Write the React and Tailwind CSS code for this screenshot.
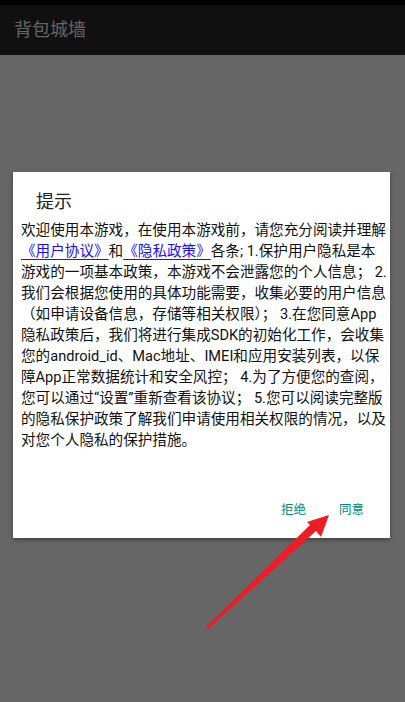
import React from "react";

const Link = ({ children }) => (
  <span className="text-[#1a0dff] underline decoration-1 underline-offset-[3px]">{children}</span>
);

export default function App() {
  const lines = [
    "欢迎使用本游戏，在使用本游戏前，请您充分阅读并理解",
    null,
    "游戏的一项基本政策，本游戏不会泄露您的个人信息； 2.",
    "我们会根据您使用的具体功能需要，收集必要的用户信息",
    "（如申请设备信息，存储等相关权限）； 3.在您同意App",
    "隐私政策后，我们将进行集成SDK的初始化工作，会收集",
    "您的android_id、Mac地址、IMEI和应用安装列表，以保",
    "障App正常数据统计和安全风控； 4.为了方便您的查阅，",
    "您可以通过“设置”重新查看该协议； 5.您可以阅读完整版",
    "的隐私保护政策了解我们申请使用相关权限的情况，以及",
    "对您个人隐私的保护措施。",
  ];
  return (
    <div
      className="relative w-[405px] h-[702px] flex flex-col bg-[#666666] overflow-hidden"
      style={{ fontFamily: "Roboto, 'Noto Sans CJK SC', sans-serif" }}
    >
      <div className="h-[5px] bg-black" />
      <div className="h-[50px] bg-[#101010] flex items-center pl-[14px]">
        <span className="text-[18px] text-[#666666] leading-none">背包城墙</span>
      </div>
      <div className="flex-1 pt-[117px] pl-[13px]">
        <div className="w-[377px] h-[366px] bg-white flex flex-col shadow-[0_2px_4px_rgba(0,0,0,0.35)]">
          <div className="pt-[18px] pl-[23px] text-[18px] leading-[24px] text-[#222]">提示</div>
          <div className="mt-[6px] pl-[8px] text-[14.6px] leading-[21px] text-[#111] whitespace-nowrap">
            {lines.map((l, i) =>
              l === null ? (
                <div key={i}>
                  <Link>《用户协议》</Link>和<Link>《隐私政策》</Link>各条; 1.保护用户隐私是本
                </div>
              ) : (
                <div key={i}>{l}</div>
              )
            )}
          </div>
          <div className="flex-1" />
          <div className="flex justify-end gap-[33px] pr-[26px] pb-[21px] text-[12.5px] leading-[14px] text-[#00897b]">
            <span>拒绝</span>
            <span>同意</span>
          </div>
        </div>
      </div>
      <svg className="absolute left-0 top-0" width="405" height="702" viewBox="0 0 405 702">
        <polygon
          points="329,515 321,537 316,531 208,629 206,627 310,525 307,522"
          fill="#ee1c25"
        />
      </svg>
    </div>
  );
}
